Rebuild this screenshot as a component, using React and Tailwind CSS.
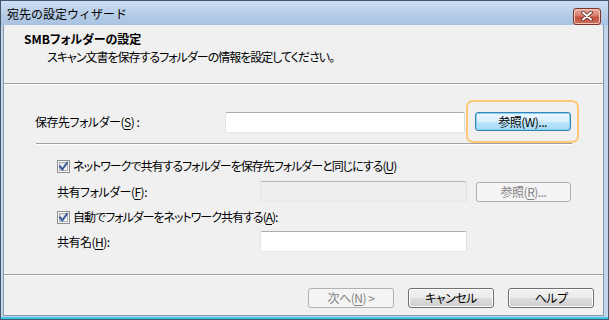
import React from 'react';

const jp = "font-['Noto_Sans_CJK_JP',sans-serif] [font-feature-settings:'palt']";

const Checkbox = () => (
  <svg width="13" height="13" viewBox="0 0 13 13" className="shrink-0">
    <defs>
      <linearGradient id="cbg" x1="0" y1="0" x2="1" y2="1">
        <stop offset="0" stopColor="#dcdcdc" />
        <stop offset="1" stopColor="#ffffff" />
      </linearGradient>
    </defs>
    <rect x="0.5" y="0.5" width="12" height="12" fill="#f4f4f4" stroke="#8e8f8f" />
    <rect x="2.5" y="2.5" width="8" height="8" fill="url(#cbg)" stroke="#aeb3b9" />
    <path d="M3 6.5 L5.4 9.3 L10 2.8" fill="none" stroke="#3c5a9a" strokeWidth="2" strokeLinecap="square" />
  </svg>
);

const Btn = ({ children, disabled, className = '' }) => (
  <div
    className={`flex items-center justify-center h-[20px] rounded-[3px] border text-[12px] leading-none ${
      disabled
        ? 'border-[#adb2b5] bg-[#f4f4f4] text-[#838383]'
        : 'border-[#707070] bg-[linear-gradient(to_bottom,#f2f2f2_0%,#ebebeb_50%,#dddddd_50%,#cfcfcf_100%)] shadow-[inset_0_0_0_1px_#fcfcfc] text-black'
    } ${className}`}
  >
    {children}
  </div>
);

const Input = ({ disabled, className = '' }) => (
  <div
    className={`h-[21px] rounded-[2px] border border-[#abadb3] border-b-[#e3e9ef] border-l-[#e2e3ea] border-r-[#dbdfe6] ${
      disabled ? 'bg-[#eeeeee] border-[#b6b6b6]' : 'bg-white'
    } ${className}`}
  />
);

const U = ({ children }) => <span className="underline underline-offset-2">{children}</span>;

export default function App() {
  return (
    <div className={`w-[609px] h-[320px] flex flex-col border border-[#46566a] bg-[#c3d5ea] text-[12px] text-black tracking-[-0.5px] ${jp}`}>
      {/* title bar */}
      <div className="h-[24px] shrink-0 flex items-center justify-between pl-[6px] pr-[7px] bg-[linear-gradient(to_bottom,#cddff3,#b4cbe6_60%,#a9c3e3)]">
        <span className="text-[12px] leading-none pt-[2px] tracking-normal [font-feature-settings:normal]">宛先の設定ウィザード</span>
        <div className="w-[28px] h-[17px] mt-[6px] rounded-[3px] border border-[#7d3328] bg-[linear-gradient(to_bottom,#eab0a2,#d7786a_45%,#c4503f_55%,#d0705c)] shadow-[inset_0_0_0_1px_#f3c4b8] flex items-center justify-center">
          <svg width="12" height="10" viewBox="0 0 12 10">
            <path d="M2 1.5 L10 8.5 M10 1.5 L2 8.5" stroke="#5a2a22" strokeWidth="3.6" strokeLinecap="round" />
            <path d="M2 1.5 L10 8.5 M10 1.5 L2 8.5" stroke="#ffffff" strokeWidth="2" strokeLinecap="round" />
          </svg>
        </div>
      </div>

      {/* client */}
      <div className="flex-1 flex flex-col pl-[2px] pr-[4px]">
        <div className="flex-1 flex flex-col bg-[#f0f0f0] border-x border-b border-[#8497ae]">
          {/* header */}
          <div className="h-[58px] shrink-0 pt-[7px]">
            <div className="pl-[20px] font-bold leading-[14px] tracking-normal">SMBフォルダーの設定</div>
            <div className="pl-[43px] leading-[12px] mt-[5px] tracking-[-1px]">スキャン文書を保存するフォルダーの情報を設定してください。</div>
          </div>
          <div className="border-t border-[#a0a0a0] border-b border-b-white" />

          {/* destination folder */}
          <div className="mt-[15px] h-[43px] flex items-center">
            <div className="pl-[31px] w-[221px] shrink-0">保存先フォルダー(<U>S</U>) :</div>
            <Input className="w-[240px] mt-[1px]" />
            <div className="ml-[1px] w-[113px] h-[43px] rounded-[7px] border-2 border-[#fcc878] flex items-center justify-center">
              <div className="w-[96px] h-[19px] rounded-[3px] border border-[#3c7fb1] bg-[linear-gradient(to_bottom,#eaf6fd_0%,#d9f0fc_50%,#bee6fd_50%,#a7d9f5_100%)] shadow-[inset_0_0_0_1px_#7fd6f6] flex items-center justify-center leading-none">
                参照(W)...
              </div>
            </div>
          </div>
          <div className="ml-[32px] w-[536px] border-t border-[#a0a0a0] border-b border-b-white" />

          {/* share same */}
          <div className="mt-[13px] h-[16px] pl-[53px] flex items-center gap-[3px]">
            <Checkbox />
            <span className="tracking-[-1px]">ネットワークで共有するフォルダーを保存先フォルダーと同じにする(<U>U</U>)</span>
          </div>
          <div className="mt-[7px] h-[21px] flex items-center">
            <div className="pl-[53px] w-[256px] shrink-0">共有フォルダー(<U>F</U>):</div>
            <Input disabled className="w-[207px]" />
            <Btn disabled className="ml-[9px] w-[95px] h-[20px]">参照(<U>R</U>)...</Btn>
          </div>

          {/* auto share */}
          <div className="mt-[7px] h-[16px] pl-[53px] flex items-center gap-[3px]">
            <Checkbox />
            <span className="tracking-[-1px]">自動でフォルダーをネットワーク共有する(<U>A</U>):</span>
          </div>
          <div className="mt-[6px] h-[21px] flex items-center">
            <div className="pl-[53px] w-[256px] shrink-0">共有名(<U>H</U>):</div>
            <Input className="w-[207px]" />
          </div>

          <div className="flex-1" />
          <div className="border-t border-[#a0a0a0] border-b border-b-white" />
          <div className="h-[39px] flex items-start justify-end gap-[14px] pr-[9px] pt-[12px]">
            <Btn disabled className="w-[86px]">次へ(<U>N</U>)&nbsp;&gt;</Btn>
            <Btn className="w-[86px]">キャンセル</Btn>
            <Btn className="w-[86px]">ヘルプ</Btn>
          </div>
        </div>
        <div className="h-[1px]" />
      </div>
      <div className="h-[2px] bg-[#3cc6e8]" />
    </div>
  );
}
